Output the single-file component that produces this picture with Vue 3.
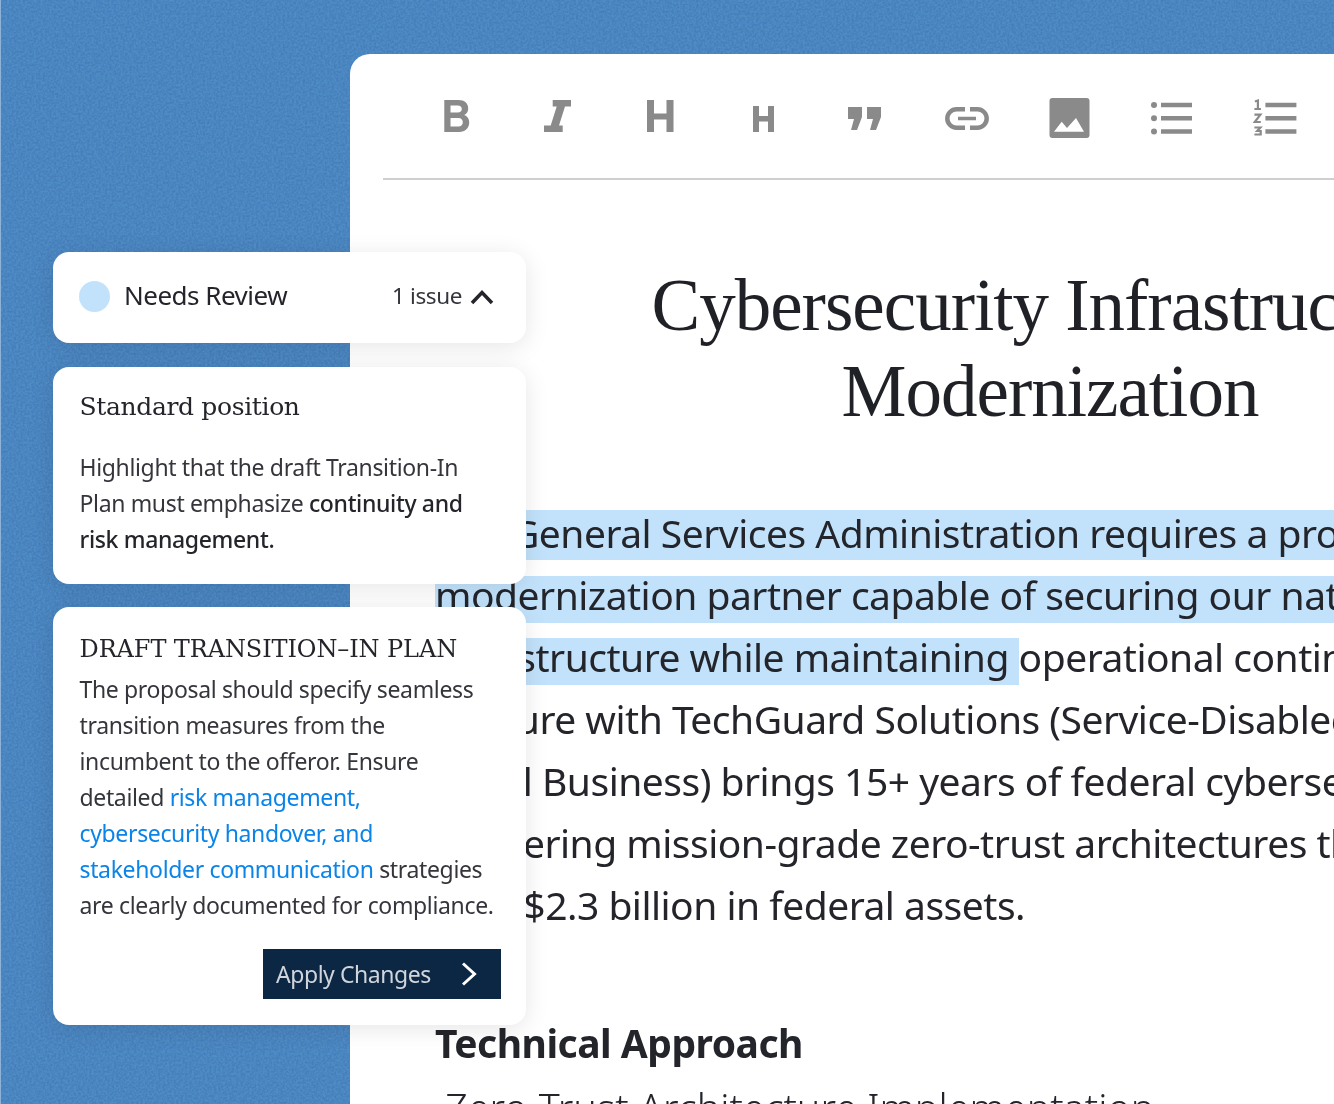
<script setup>
const docLines = [
  { before: '', mark: 'The General Services Administration requires a proven', after: '' },
  { before: '', mark: 'modernization partner capable of securing our nation', after: '' },
  { before: '', mark: 'infrastructure while maintaining ', after: 'operational continuity' },
  { before: 'Venture with TechGuard Solutions (Service-Disabled', mark: '', after: '' },
  { before: 'Small Business) brings 15+ years of federal cybersecurity', mark: '', after: '' },
  { before: 'Delivering mission-grade zero-trust architectures that', mark: '', after: '' },
  { before: 'over $2.3 billion in federal assets.', mark: '', after: '' }
]
</script>

<template>
  <main class="stage">
    <svg class="grain" width="1334" height="1104" aria-hidden="true">
      <filter id="grain-noise" color-interpolation-filters="sRGB" x="0" y="0" width="100%" height="100%">
        <feTurbulence type="fractalNoise" baseFrequency="0.45" numOctaves="2" seed="4" />
        <feColorMatrix values="2 0 0 0 -0.5  2 0 0 0 -0.5  2 0 0 0 -0.5  0 0 0 0 1" />
      </filter>
      <rect width="1334" height="1104" filter="url(#grain-noise)" />
    </svg>

    <section class="paper">
      <div class="toolbar">
        <svg viewBox="0 0 48 48" class="tool">
          <path fill-rule="evenodd" d="M12.3 6h14.2c6 0 9.7 3.3 9.7 8.4 0 3-1.5 5.400-4 6.600 3 1 5 3.700 5 7.500 0 5.600-4 9.500-10 9.500H12.300ZM18.500 11.500v7h7.300c2.500 0 4-1.400 4-3.500s-1.500-3.500-4-3.500ZM18.500 24v8.500h8c2.700 0 4.300-1.700 4.300-4.200S29.200 24 26.500 24Z" />
        </svg>
        <svg viewBox="0 0 48 48" class="tool">
          <path d="M18.700 6H37v6.500h-6L25 31.500h3.700V38H10v-6.500h6.700l6-19h-4Z" />
        </svg>
        <svg viewBox="0 0 48 48" class="tool">
          <path d="M11 6h7v13.500h12.500V6h7v32h-7V25.500H18V38h-7Z" />
        </svg>
        <svg viewBox="0 0 48 48" class="tool">
          <path d="M14 12h6v10h9V12h6v26h-6V27.500h-9V38h-6Z" />
        </svg>
        <svg viewBox="0 0 48 48" class="tool">
          <path d="M7 13h14v10l-5 13h-6l3-11H7ZM26 13h14v10l-5 13h-6l3-11h-6Z" />
        </svg>
        <svg viewBox="0 0 48 48" class="tool">
          <path class="line" stroke-width="4.500" d="M22 15.300h-8.500a9.200 9.200 0 0 0 0 18.400H22M27 15.300h7.500a9.200 9.200 0 0 1 0 18.400H27" />
          <path class="line" stroke-width="3.500" d="M15 24.500h18" />
        </svg>
        <svg viewBox="0 0 48 48" class="tool">
          <rect x="4.500" y="4" width="40" height="40" rx="3" />
          <path fill="#fff" d="M9 37.700 16.700 27.700 22 34 31 24 39 37.700Z" />
        </svg>
        <svg viewBox="0 0 48 48" class="tool">
          <circle cx="7" cy="11" r="3" /><circle cx="7" cy="24.300" r="3" /><circle cx="7" cy="37.500" r="3" />
          <path d="M14 8.700h31v4.600H14ZM14 22h31v4.600H14ZM14 35.200h31v4.600H14Z" />
        </svg>
        <svg viewBox="-1.400 0 48 48" class="tool">
          <path class="line" stroke-width="2.200" d="M3.500 7.500 6.500 6.500V15M3 15h6.500M3 20.700h6L3.400 28h6M3 33.500h6L5.800 37h3.500v3.500H3" />
          <path d="M14 8.700h31v4.600H14ZM14 22h31v4.600H14ZM14 35.200h31v4.600H14Z" />
        </svg>
      </div>

      <article class="doc">
        <h1>Cybersecurity Infrastructure<br>Modernization</h1>
        <div class="doc-body">
          <p v-for="line in docLines" :key="line.before + line.mark">{{ line.before }}<mark>{{ line.mark }}</mark>{{ line.after }}</p>
        </div>
        <h2>Technical Approach</h2>
        <h3>Zero-Trust Architecture Implementation</h3>
      </article>
    </section>

    <aside class="panel">
      <div class="card status">
        <span class="dot"></span>
        <span class="status-label">Needs Review</span>
        <span class="issues">1 issue</span>
        <svg class="chev" width="24" height="16" viewBox="0 0 24 16">
          <path d="M2 14 12 3.500 22 14" />
        </svg>
      </div>

      <div class="card note">
        <h4>Standard position</h4>
        <p class="note-text">Highlight that the draft Transition-In<br>Plan must emphasize <b>continuity and<br>risk management.</b></p>
      </div>

      <div class="card note draft">
        <h4>DRAFT TRANSITION–IN PLAN</h4>
        <p class="note-text">The proposal should specify seamless<br>transition measures from the<br>incumbent to the offeror. Ensure<br>detailed <em>risk management,<br>cybersecurity handover, and<br>stakeholder communication</em> strategies<br>are clearly documented for compliance.</p>
        <div class="actions">
          <button class="apply">
            Apply Changes
            <svg width="18" height="26" viewBox="0 0 18 26"><path d="M3 2.500 14.500 13 3 23.500" /></svg>
          </button>
        </div>
      </div>
    </aside>
  </main>
</template>

<style scoped>
.stage {
  position: relative;
  width: 1334px;
  height: 1104px;
  overflow: hidden;
  background: #4a85c0;
  box-shadow: inset 1px 0 0 #8fb3d8;
  font-family: "Noto Sans", sans-serif;
  color: #23252b;
}
.grain {
  position: absolute;
  top: 0;
  left: 1px;
  opacity: 0.07;
  mix-blend-mode: overlay;
}
.paper {
  position: relative;
  width: 1365px;
  min-height: 1100px;
  margin-left: 350px;
  top: 54px;
  background: #fff;
  border-radius: 20px 0 0 0;
  padding-top: 40px;
}
.toolbar {
  display: flex;
  gap: 54.200px;
  margin-left: 33px;
  padding: 0 0 36px 49px;
  border-bottom: 2px solid #cfcfcf;
}
.tool {
  flex: none;
  width: 48px;
  height: 48px;
  fill: #8a8a8a;
}
.line {
  fill: none;
  stroke: #8a8a8a;
}
.doc {
  width: 1230px;
  margin-left: 85px;
}
h1 {
  margin: 83px 0 67px;
  font-family: "Liberation Serif", serif;
  font-weight: 400;
  font-size: 73px;
  line-height: 86px;
  text-align: center;
  letter-spacing: -1px;
  color: #1f2126;
}
.doc-body p {
  margin: 0;
  height: 62px;
  font-size: 39px;
  line-height: 62px;
  letter-spacing: -0.500px;
  white-space: pre;
}
mark {
  padding-bottom: 2px;
  background: linear-gradient(#c2e2fb, #c2e2fb) no-repeat left bottom / 100% 47px;
  color: inherit;
}
.doc-body p:first-child mark {
  background-size: 100% 50px;
  background-position: left bottom 1px;
}
h2 {
  margin: 82px 0 0;
  font-size: 39px;
  line-height: 50px;
  font-weight: 700;
  letter-spacing: -0.500px;
}
h3 {
  margin: 15px 0 0 10px;
  font-size: 39.500px;
  line-height: 50px;
  font-weight: 300;
  white-space: nowrap;
}
.panel {
  position: absolute;
  top: 252px;
  left: 53px;
  width: 473px;
  display: flex;
  flex-direction: column;
  gap: 23.500px;
}
.card {
  background: #fff;
  border-radius: 16px;
  box-shadow: 0 4px 24px rgba(0, 0, 0, 0.1);
}
.status {
  display: flex;
  align-items: center;
  height: 87px;
  padding: 0 32px 4px 26px;
}
.dot {
  width: 31px;
  height: 31px;
  border-radius: 50%;
  background: #c2e2fb;
  margin: 2px 14px 0 0;
}
.status-label {
  font-size: 26px;
  letter-spacing: -0.500px;
  margin: 0 auto 2px 0;
}
.issues {
  font-size: 22.500px;
  letter-spacing: -0.400px;
  color: #34363c;
  margin-right: 8px;
}
.chev {
  margin-top: 2px;
}
.chev path {
  fill: none;
  stroke: #23252b;
  stroke-width: 3.500;
}
.note {
  padding: 20px 25px 27px 26.500px;
}
h4 {
  margin: 0;
  font-family: "DejaVu Serif", serif;
  font-weight: 400;
  font-size: 25px;
  line-height: 40px;
  letter-spacing: -0.350px;
  color: #23252b;
}
.draft {
  padding: 22px 25px 26px 26.500px;
}
.draft h4 {
  font-size: 24px;
  letter-spacing: -0.100px;
}
.note-text {
  margin: 22px 0 0;
  font-size: 23px;
  line-height: 36px;
  letter-spacing: -0.350px;
  color: #34363c;
  white-space: nowrap;
}
.note-text b {
  font-weight: 500;
  color: #23252b;
}
.note-text em {
  font-style: normal;
  color: #0a84e8;
}
.draft .note-text {
  margin-top: 2px;
}
.actions {
  display: flex;
  justify-content: flex-end;
  margin-top: 26px;
}
.apply {
  display: flex;
  align-items: center;
  justify-content: space-between;
  width: 238px;
  height: 50px;
  padding: 0 23.500px 0 13px;
  border: none;
  background: #0c2744;
  color: #d0d5dc;
  font-family: inherit;
  font-size: 23px;
  letter-spacing: -0.450px;
}
.apply path {
  fill: none;
  stroke: #fff;
  stroke-width: 3;
}
</style>
